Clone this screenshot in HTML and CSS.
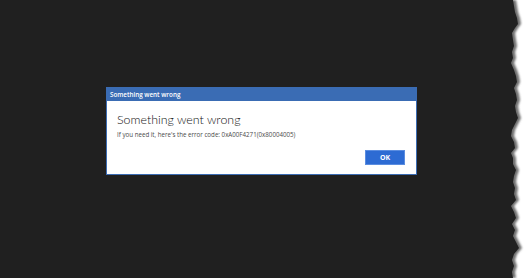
FILE: index.html
```html
<!DOCTYPE html>
<html>
<head>
<meta charset="utf-8">
<link rel="stylesheet" href="styles.css">
</head>
<body>
<div class="page">
  <main class="screen">
    <section class="dialog">
      <header class="titlebar">Something went wrong</header>
      <div class="content">
        <h1 class="heading">Something went wrong</h1>
        <p class="message">If you need it, here's the error code: 0xA00F4271(0x80004005)</p>
        <div class="actions">
          <button class="ok">OK</button>
        </div>
      </div>
    </section>
  </main>
  <svg class="edge" width="24" height="278" viewBox="0 0 24 278">
    <defs>
      <filter id="blur" x="-50%" y="-5%" width="200%" height="110%">
        <feGaussianBlur stdDeviation="0.9"/>
      </filter>
    </defs>
    <rect x="0" y="0" width="24" height="278" fill="#ffffff"/>
    <polygon filter="url(#blur)" fill="#6e6e6e" points="0,0 10,0 11,6 12,12 14,18 15,24 12,28 9,33 10,40 11,46 9,52 10,58 8,63 11,70 13,76 14,82 11,88 13,94 14,100 12,106 13,112 15,118 12,124 9,130 8,136 11,142 12,148 8,153 10,158 10,164 13,170 11,176 10,182 12,188 11,194 13,200 8,206 11,212 13,218 9,224 12,230 10,236 13,242 16,248 11,254 9,260 11,266 9,272 10,278 0,278"/>
    <polygon fill="#202020" points="0,0 7,0 8,6 9,12 11,18 12,24 9,28 6,33 7,40 8,46 6,52 7,58 5,63 8,70 10,76 11,82 8,88 10,94 11,100 9,106 10,112 12,118 9,124 6,130 5,136 8,142 9,148 5,153 7,158 7,164 10,170 8,176 7,182 9,188 8,194 10,200 5,206 8,212 10,218 6,224 9,230 7,236 10,242 13,248 8,254 6,260 8,266 6,272 7,278 0,278"/>
  </svg>
</div>
</body>
</html>
```
FILE: styles.css
```css
html, body {
  margin: 0;
  padding: 0;
}
body {
  width: 530px;
  height: 278px;
  overflow: hidden;
  background: #202020;
  font-family: "Open Sans", "Noto Sans", sans-serif;
}
.page {
  display: flex;
  width: 530px;
  height: 278px;
}
.screen {
  flex: 1;
  padding: 87px 0 0 106px;
  box-sizing: border-box;
}
.edge {
  display: block;
  flex: 0 0 24px;
}
.dialog {
  width: 311px;
  height: 88px;
  box-sizing: border-box;
  background: #ffffff;
  border: 1px solid #3b6cb3;
  display: flex;
  flex-direction: column;
}
.titlebar {
  height: 13px;
  background: #3a6cb4;
  color: #ffffff;
  font-size: 6.3px;
  font-weight: 600;
  line-height: 13px;
  padding-left: 3px;
}
.content {
  padding: 10px 10px 0 10px;
  display: flex;
  flex-direction: column;
}
.heading {
  margin: 0;
  font-family: "Lato", "Open Sans", sans-serif;
  font-size: 12.4px;
  font-weight: 300;
  color: #111111;
  line-height: 17px;
}
.message {
  margin: 2px 0 0 0;
  font-size: 6.2px;
  color: #4a4a4a;
  line-height: 9px;
}
.actions {
  display: flex;
  justify-content: flex-end;
  padding-right: 1px;
  margin-top: 11px;
}
.ok {
  width: 40px;
  height: 15px;
  box-sizing: border-box;
  border: 1px solid #5b8de0;
  background: #2d6bd3;
  color: #ffffff;
  font-family: "Open Sans", "Noto Sans", sans-serif;
  font-size: 7px;
  font-weight: 700;
  padding: 0;
  line-height: 13px;
}
```
